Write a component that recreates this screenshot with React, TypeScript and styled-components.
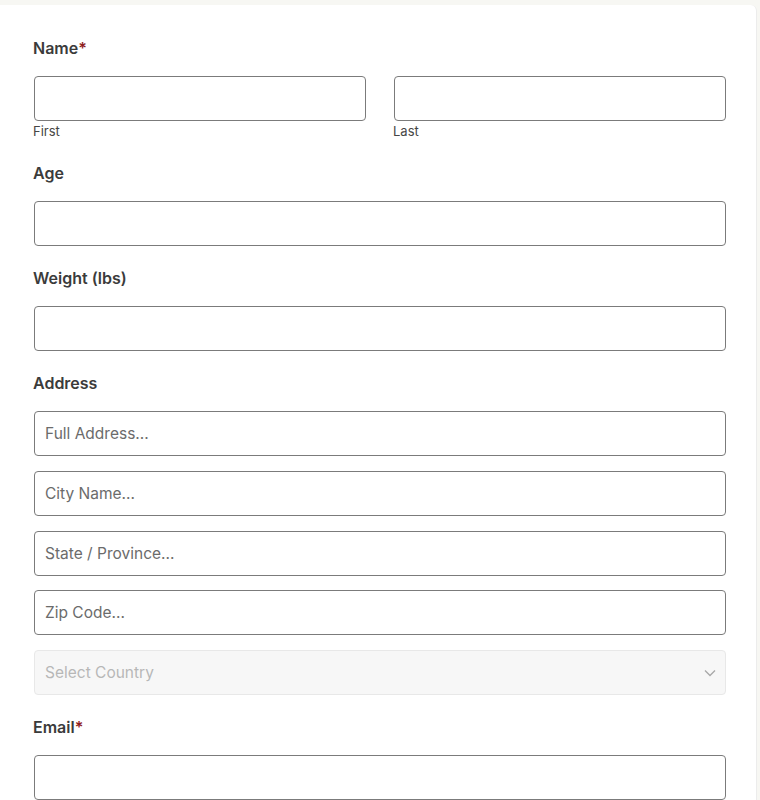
import React from "react";
import styled, { createGlobalStyle } from "styled-components";

const Global = createGlobalStyle`
  html, body { margin: 0; padding: 0; background: #f7f7f3; }
  body { font-family: Inter, "Open Sans", Arial, sans-serif; }
  * { box-sizing: border-box; }
`;

const Card = styled.div`
  margin-top: 5px;
  width: 757px;
  min-height: 795px;
  background: #ffffff;
  border-right: 1px solid #ececec;
  border-radius: 0 6px 0 0;
  padding: 33px 30px 0 34px;
  display: flex;
  flex-direction: column;
  gap: 22px;
`;

const Field = styled.div`
  display: flex;
  flex-direction: column;
`;

const Label = styled.div`
  font-size: 16px;
  line-height: 20px;
  font-weight: 600;
  color: #3b3b3b;
  margin-left: -1px;
  margin-bottom: 18px;
`;

const Req = styled.span`
  color: #8f1d1d;
`;

const Row = styled.div`
  display: grid;
  grid-template-columns: 1fr 1fr;
  column-gap: 28px;
`;

const Col = styled.div`
  display: flex;
  flex-direction: column;
`;

const Stack = styled.div`
  display: flex;
  flex-direction: column;
  gap: 14.75px;
`;

const Input = styled.input`
  height: 45px;
  width: 100%;
  border: 1px solid #7b7b7b;
  border-radius: 4px;
  padding: 0 10px;
  font-family: inherit;
  font-size: 15.5px;
  color: #333;
  background: #fff;
  outline: none;
  &::placeholder { color: #6b6b6b; opacity: 1; }
`;

const Sub = styled.div`
  margin-top: 1px;
  margin-left: -1px;
  font-size: 13px;
  line-height: 19px;
  color: #464646;
`;

const SelectBox = styled.div`
  height: 45px;
  border: 1px solid #e8e8e8;
  border-radius: 4px;
  background: #f7f7f7;
  display: flex;
  align-items: center;
  justify-content: space-between;
  padding: 0 9px 0 10px;
  font-size: 15.5px;
  color: #b7b7b7;
`;

const Chevron = styled.svg`
  width: 12px;
  height: 12px;
`;

export default function App() {
  return (
    <>
      <Global />
      <Card>
        <Field>
          <Label>Name<Req>*</Req></Label>
          <Row>
            <Col>
              <Input />
              <Sub>First</Sub>
            </Col>
            <Col>
              <Input />
              <Sub>Last</Sub>
            </Col>
          </Row>
        </Field>
        <Field>
          <Label>Age</Label>
          <Input />
        </Field>
        <Field>
          <Label>Weight (lbs)</Label>
          <Input />
        </Field>
        <Field>
          <Label>Address</Label>
          <Stack>
            <Input placeholder="Full Address..." />
            <Input placeholder="City Name..." />
            <Input placeholder="State / Province..." />
            <Input placeholder="Zip Code..." />
            <SelectBox>
              <span>Select Country</span>
              <Chevron viewBox="0 0 12 12">
                <path d="M1 3.5 L6 8.5 L11 3.5" fill="none" stroke="#a8a8a8" strokeWidth="1.3" />
              </Chevron>
            </SelectBox>
          </Stack>
        </Field>
        <Field>
          <Label>Email<Req>*</Req></Label>
          <Input />
        </Field>
      </Card>
    </>
  );
}
